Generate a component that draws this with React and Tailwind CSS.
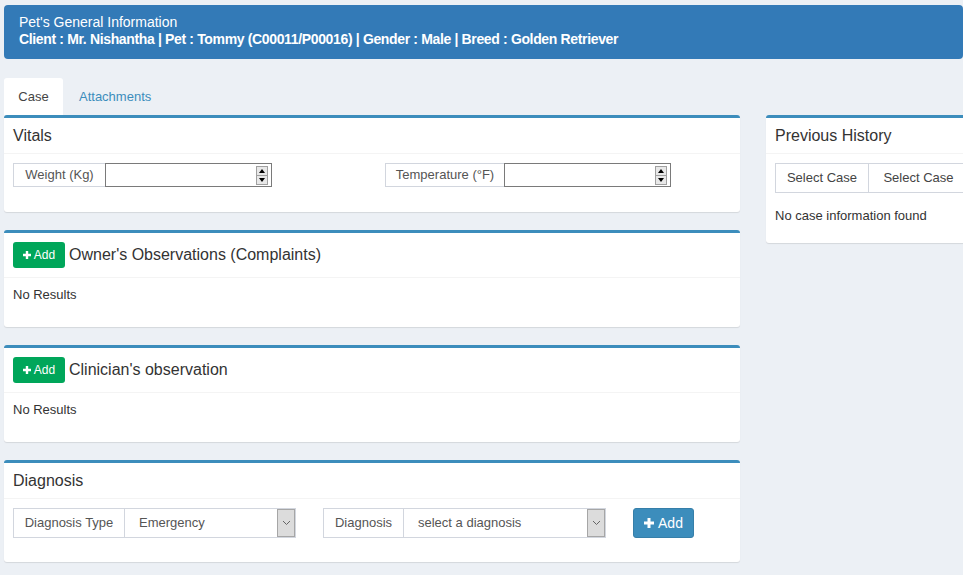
import React from 'react'

const font = { fontFamily: '"Liberation Sans", Arial, sans-serif' }

const Box = ({ children, className = '' }) => (
  <div className={`rounded-[3px] border-t-[3px] border-[#3c8dbc] bg-white shadow-[0_1px_1px_rgba(0,0,0,0.1)] ${className}`}>
    {children}
  </div>
)

const BoxHeader = ({ children, className = '' }) => (
  <div className={`flex items-center border-b border-[#f4f4f4] px-[9px] ${className}`}>{children}</div>
)

const Spinner = () => (
  <div className="absolute right-[3px] top-[2px] flex h-[19px] w-[12px] flex-col border border-[#a0a0a0] bg-[#e8e8e8]">
    <div className="flex flex-1 items-center justify-center border-b border-[#a0a0a0]">
      <div className="h-0 w-0 border-x-[3px] border-b-[4px] border-x-transparent border-b-black" />
    </div>
    <div className="flex flex-1 items-center justify-center">
      <div className="h-0 w-0 border-x-[3px] border-t-[4px] border-x-transparent border-t-black" />
    </div>
  </div>
)

const NumberGroup = ({ label, labelW }) => (
  <div className="flex h-[24px] items-stretch">
    <div
      className="flex items-center justify-center border border-r-0 border-[#d2d6de] text-[13px] text-[#555]"
      style={{ width: labelW }}
    >
      {label}
    </div>
    <div className="relative w-[167px] border border-[#7a7a7a] bg-white">
      <Spinner />
    </div>
  </div>
)

const Chevron = () => (
  <svg width="9" height="6" viewBox="0 0 9 6">
    <path d="M1 1 L4.5 4.5 L8 1" fill="none" stroke="#666" strokeWidth="1" />
  </svg>
)

const SelectGroup = ({ label, labelW, value, selectW }) => (
  <div className="flex h-[30px] items-stretch">
    <div
      className="flex items-center justify-center border border-r-0 border-[#d2d6de] text-[13px] text-[#555]"
      style={{ width: labelW }}
    >
      {label}
    </div>
    <div className="flex items-stretch border border-[#d2d6de] bg-white" style={{ width: selectW }}>
      <div className="flex flex-1 items-center pl-[14px] text-[13px] text-[#555]">{value}</div>
      <div className="flex w-[18px] items-center justify-center border border-[#a6a6a6] bg-[#dcdcdc]">
        <Chevron />
      </div>
    </div>
  </div>
)

const PlusIcon = ({ size = 9 }) => (
  <svg width={size} height={size} viewBox="0 0 10 10">
    <path d="M3.5 0h3v3.5H10v3H6.5V10h-3V6.5H0v-3h3.5z" fill="white" />
  </svg>
)

const GreenAdd = () => (
  <div className="flex h-[26px] w-[52px] items-center justify-center gap-[3px] rounded-[3px] bg-[#00a65a] text-[12px] text-white">
    <PlusIcon size={8} />
    <span>Add</span>
  </div>
)

const ObservationBox = ({ title }) => (
  <Box className="h-[97px]">
    <BoxHeader className="h-[45px] gap-[4px]">
      <GreenAdd />
      <span className="text-[16px] text-[#333]">{title}</span>
    </BoxHeader>
    <div className="px-[9px] pt-[8px] text-[13px] leading-[18px] text-[#333]">No Results</div>
  </Box>
)

export default function App() {
  return (
    <div className="flex h-[575px] w-[965px] overflow-hidden bg-[#ecf0f5]" style={font}>
      <div className="flex w-[963px] shrink-0 flex-col overflow-hidden pl-[4px] pt-[5px]">
        <div className="h-[54px] w-[959px] rounded-[4px] bg-[#337ab7] px-[15px] pt-[9px] text-[14px] leading-[17px] text-white">
          <div>Pet's General Information</div>
          <div className="font-bold tracking-[-0.35px]">
            Client : Mr. Nishantha | Pet : Tommy (C00011/P00016) | Gender : Male | Breed : Golden Retriever
          </div>
        </div>

        <div className="mt-[19px] flex h-[37px] items-stretch">
          <div className="flex w-[59px] items-center justify-center rounded-t-[3px] bg-white text-[13px] text-[#444]">
            Case
          </div>
          <div className="flex items-center pl-[16px] text-[13px] text-[#3c8dbc]">Attachments</div>
        </div>

        <div className="flex gap-[26px]">
          <div className="flex w-[736px] shrink-0 flex-col gap-[18px]">
            <Box className="h-[97px]">
              <BoxHeader className="h-[36px]">
                <span className="text-[16px] text-[#333]">Vitals</span>
              </BoxHeader>
              <div className="flex px-[9px] pt-[9px]">
                <div className="w-[372px]">
                  <NumberGroup label="Weight (Kg)" labelW={92} />
                </div>
                <NumberGroup label="Temperature (°F)" labelW={119} />
              </div>
            </Box>

            <ObservationBox title="Owner's Observations (Complaints)" />
            <ObservationBox title="Clinician's observation" />

            <Box className="h-[102px]">
              <BoxHeader className="h-[36px]">
                <span className="text-[16px] text-[#333]">Diagnosis</span>
              </BoxHeader>
              <div className="flex items-center px-[9px] pt-[9px]">
                <SelectGroup label="Diagnosis Type" labelW={111} value="Emergency" selectW={172} />
                <div className="ml-[27px]">
                  <SelectGroup label="Diagnosis" labelW={80} value="select a diagnosis" selectW={203} />
                </div>
                <div className="ml-[27px] flex h-[30px] w-[61px] items-center justify-center gap-[4px] rounded-[3px] border border-[#367fa9] bg-[#3c8dbc] text-[14px] text-white">
                  <PlusIcon size={10} />
                  <span>Add</span>
                </div>
              </div>
            </Box>
          </div>

          <div className="w-[220px] shrink-0">
            <Box className="h-[128px]">
              <BoxHeader className="h-[36px]">
                <span className="text-[16px] text-[#333]">Previous History</span>
              </BoxHeader>
              <div className="px-[9px] pt-[9px]">
                <div className="flex h-[30px]">
                  <div className="flex w-[94px] items-center justify-center border border-[#d2d6de] text-[13px] text-[#444]">
                    Select Case
                  </div>
                  <div className="flex w-[100px] items-center justify-center border border-l-0 border-[#d2d6de] text-[13px] text-[#444]">
                    Select Case
                  </div>
                </div>
                <div className="pt-[13px] text-[13px] text-[#333]">No case information found</div>
              </div>
            </Box>
          </div>
        </div>
      </div>
      <div className="w-[2px] shrink-0 bg-white" />
    </div>
  )
}
